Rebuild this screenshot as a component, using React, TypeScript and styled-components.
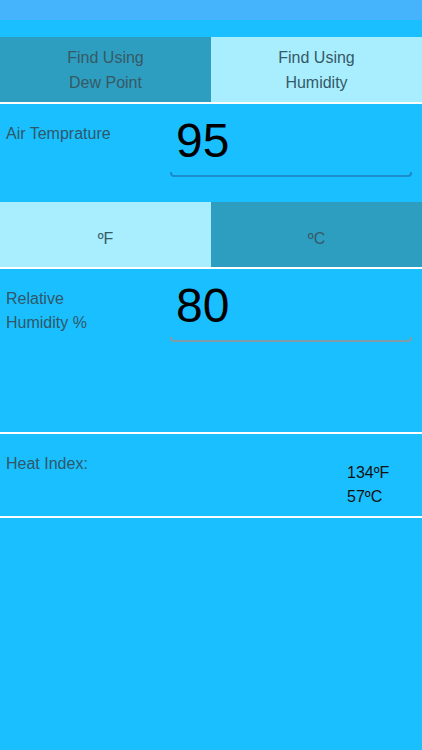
import React, { useState } from 'react';
import styled, { createGlobalStyle } from 'styled-components';

const GlobalStyle = createGlobalStyle`
  html, body {
    margin: 0;
    padding: 0;
    background: #1abfff;
    font-family: "Liberation Sans", Arial, sans-serif;
  }
`

const Screen = styled.div`
  width: 422px;
  min-height: 750px;
  background: #1abfff;
  display: flex;
  flex-direction: column;
`

const StatusBar = styled.div`
  height: 20px;
  background: #45b4fc;
`

const Spacer = styled.div`
  height: 17px;
`

const Segment = styled.div`
  display: grid;
  grid-template-columns: 211px 1fr;
  height: 65px;
  border-bottom: 2px solid #ffffff;
`

const SegmentItem = styled.button<{ $active: boolean, $offset?: number }>`
  border: none;
  margin: 0;
  padding: ${p => p.$offset || 0}px 0 0 0;
  font-family: inherit;
  font-size: 16px;
  line-height: 25px;
  color: #365966;
  background: ${p => (p.$active ? '#a8eeff' : '#2e9ec0')};
  display: flex;
  align-items: center;
  justify-content: center;
  text-align: center;
`

const Row = styled.div<{ $height: number }>`
  display: grid;
  grid-template-columns: 170px 1fr;
  height: ${p => p.$height}px;
  box-sizing: border-box;
  padding-right: 10px;
`

const Label = styled.div`
  padding: 18px 0 0 6px;
  font-size: 16px;
  line-height: 24px;
  color: #2f5868;
`

const Field = styled.div`
  padding-top: 9px;
`

const Value = styled.div`
  font-size: 48px;
  line-height: 56px;
  color: #000000;
  padding-left: 6px;
`

const Rule = styled.div<{ $color: string }>`
  margin-top: 3px;
  height: 3px;
  border-style: solid;
  border-color: ${p => p.$color};
  border-width: 0 2px 2px 2px;
  border-radius: 0 0 4px 4px;
`

const Divider = styled.div`
  height: 2px;
  background: #ffffff;
`

const ResultRow = styled.div`
  display: grid;
  grid-template-columns: 1fr 75px;
  height: 82px;
`

const Results = styled.div`
  padding-top: 27px;
  font-size: 16px;
  line-height: 24px;
  color: #111111;
`

export default function App() {
  const [mode, setMode] = useState(1)
  const [unit, setUnit] = useState(0)

  return (
    <>
      <GlobalStyle />
      <Screen>
        <StatusBar />
        <Spacer />
        <Segment>
          <SegmentItem $active={mode === 0} onClick={() => setMode(0)}>
            Find Using<br />Dew Point
          </SegmentItem>
          <SegmentItem $active={mode === 1} onClick={() => setMode(1)}>
            Find Using<br />Humidity
          </SegmentItem>
        </Segment>
        <Row $height={98}>
          <Label>Air Temprature</Label>
          <Field>
            <Value>95</Value>
            <Rule $color="#1b8bcb" />
          </Field>
        </Row>
        <Segment>
          <SegmentItem $active={unit === 0} $offset={8} onClick={() => setUnit(0)}>ºF</SegmentItem>
          <SegmentItem $active={unit === 1} $offset={8} onClick={() => setUnit(1)}>ºC</SegmentItem>
        </Segment>
        <Row $height={163}>
          <Label>Relative<br />Humidity %</Label>
          <Field>
            <Value>80</Value>
            <Rule $color="#7f9ba8" />
          </Field>
        </Row>
        <Divider />
        <ResultRow>
          <Label>Heat Index:</Label>
          <Results>
            134ºF<br />57ºC
          </Results>
        </ResultRow>
        <Divider />
      </Screen>
    </>
  )
}
